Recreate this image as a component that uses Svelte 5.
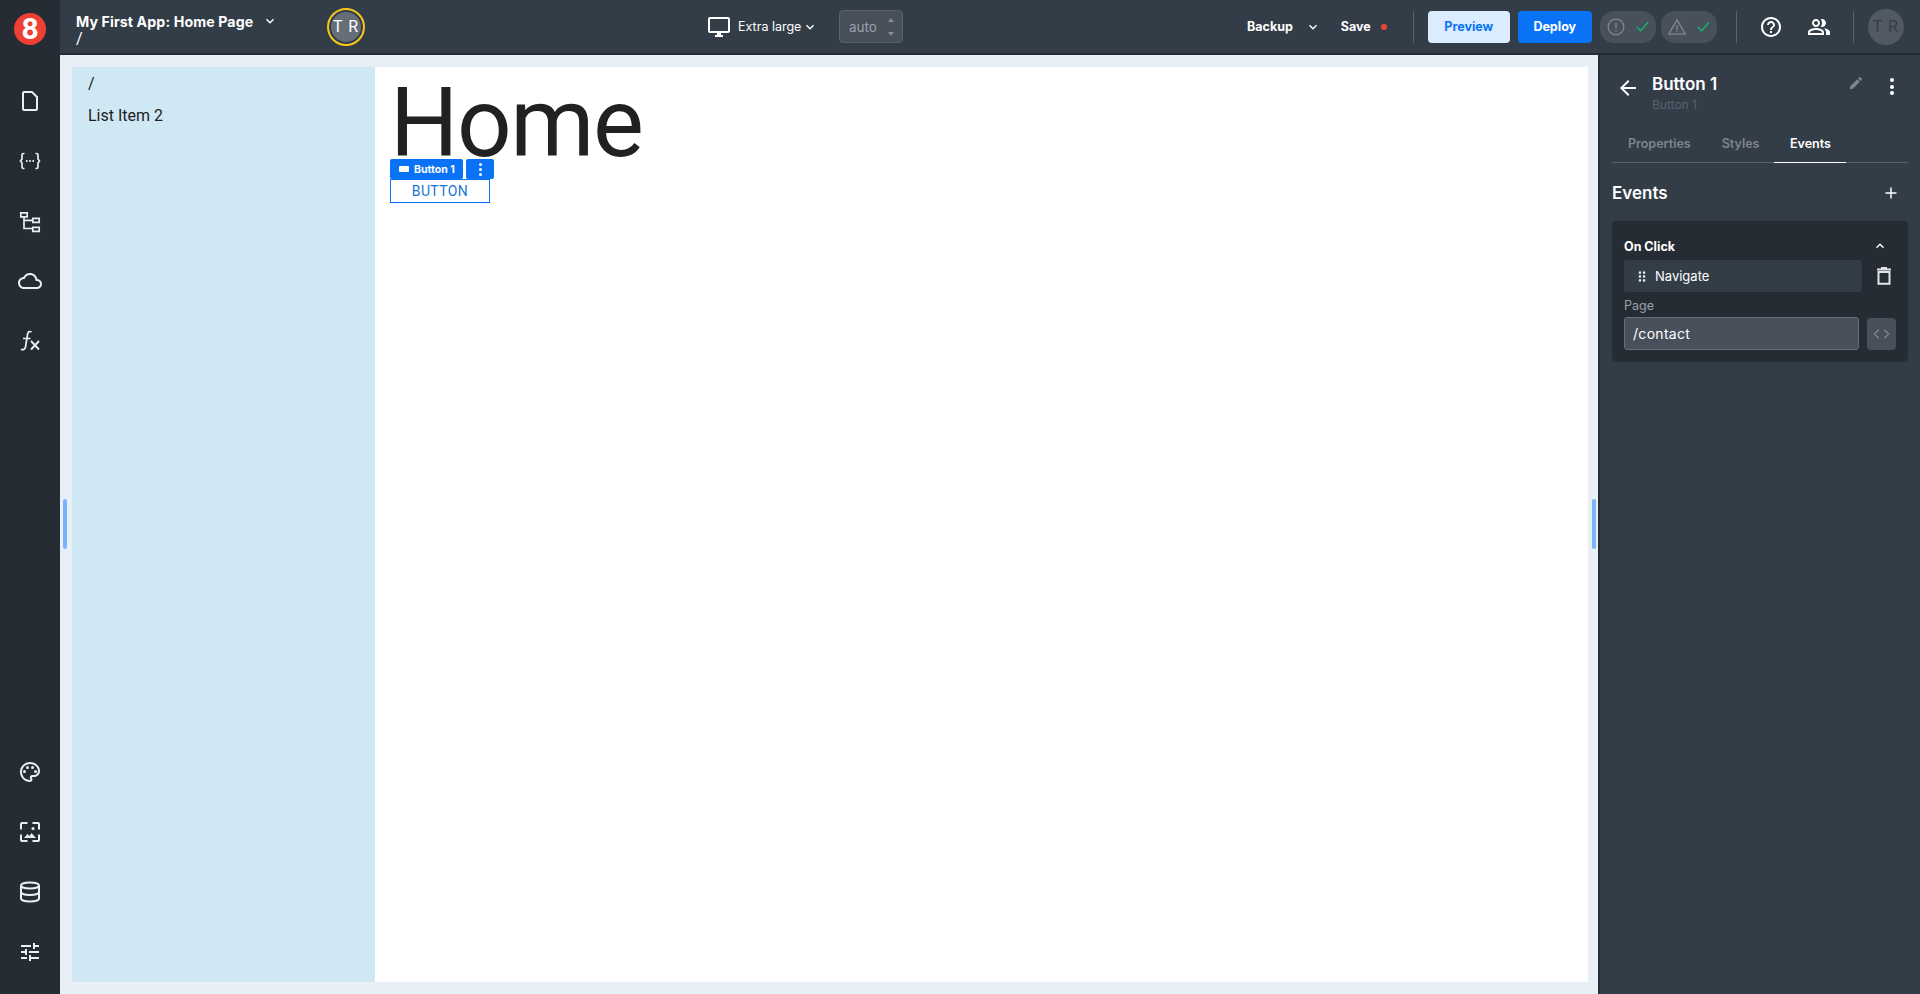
<script>
  const railTop = [
    { kind: "file" },
    { kind: "braces" },
    { kind: "tree" },
    { kind: "cloud" },
    { kind: "fx" }
  ];
  const railBottom = [{ kind: "palette" }, { kind: "image" }, { kind: "db" }, { kind: "tune" }];
  const tabs = ["Properties", "Styles", "Events"];
  const activeTab = "Events";
</script>

{#snippet chevron(cls)}
  <svg class={cls} viewBox="0 0 24 24"><path d="M7.41 8.59 12 13.17l4.59-4.58L18 10l-6 6-6-6z" fill="currentColor" /></svg>
{/snippet}

{#snippet check()}
  <svg class="check" viewBox="0 0 14 14"><path d="M1 7.500 5 11.500 13 2.500" fill="none" stroke="#12b76a" stroke-width="1.600" /></svg>
{/snippet}

{#snippet railIcon(kind)}
  <svg class="rail-icon" viewBox="0 0 24 24" fill="none" stroke="currentColor" stroke-width="2">
    {#if kind === "file"}
      <path d="M6 3h8l5 5v12a1 1 0 0 1-1 1H6a1 1 0 0 1-1-1V4a1 1 0 0 1 1-1z" />
    {:else if kind === "braces"}
      <path d="M6.500 4.500H5.500A1.500 1.500 0 0 0 4 6v4L2.500 12 4 14v4a1.500 1.500 0 0 0 1.500 1.500h1M17.500 4.500h1A1.500 1.500 0 0 1 20 6v4l1.500 2L20 14v4a1.500 1.500 0 0 1-1.500 1.500h-1" stroke-width="1.700" />
      <path d="M8 12h1.500M11.200 12h1.600M14.500 12H16" stroke-width="1.800" />
    {:else if kind === "tree"}
      <path d="M2.800 3.800h6.400v4H2.800zM14.800 9.300h6.400v4h-6.400zM14.800 18.300h6.400v4h-6.400zM6 8v11.500h8.500M6 11.300h8.500" stroke-width="1.700" />
    {:else if kind === "cloud"}
      <path fill="currentColor" stroke="none" d="M12 6c2.620 0 4.880 1.860 5.390 4.430l.3 1.500 1.530.11c1.560.1 2.780 1.410 2.780 2.960 0 1.650-1.350 3-3 3H6c-2.210 0-4-1.790-4-4 0-2.050 1.530-3.760 3.560-3.970l1.070-.11.5-.95C8.080 7.140 9.940 6 12 6m0-2C9.110 4 6.600 5.640 5.350 8.040 2.340 8.360 0 10.910 0 14c0 3.310 2.690 6 6 6h13c2.760 0 5-2.240 5-5 0-2.640-2.050-4.780-4.650-4.960C18.670 6.590 15.640 4 12 4z" />
    {:else if kind === "fx"}
      <path d="M13.500 3c-1.500-1-3.300-.5-3.800 1.500L7.500 18c-.4 2.300-2.400 3.300-4.500 2.200M5 9.500h7.500" stroke-width="1.700" />
      <path d="M13 12l8 8.500M21 12l-8 8.500" stroke-width="1.900" />
    {:else if kind === "palette"}
      <path fill="currentColor" stroke="none" d="M12 22C6.490 22 2 17.510 2 12S6.490 2 12 2s10 4.040 10 9c0 3.310-2.690 6-6 6h-1.770c-.28 0-.5.220-.5.500 0 .12.050.23.130.33.410.47.640 1.060.640 1.670 0 1.380-1.120 2.500-2.500 2.500zm0-18c-4.410 0-8 3.590-8 8s3.590 8 8 8c.28 0 .5-.22.5-.5 0-.16-.08-.28-.14-.35-.41-.46-.63-1.050-.63-1.650 0-1.380 1.120-2.500 2.500-2.500H16c2.210 0 4-1.790 4-4 0-3.860-3.590-7-8-7z" />
      <g fill="currentColor" stroke="none">
        <circle cx="6.500" cy="11.500" r="1.500" /><circle cx="9.500" cy="7.500" r="1.500" /><circle cx="14.500" cy="7.500" r="1.500" /><circle cx="17.500" cy="11.500" r="1.500" />
      </g>
    {:else if kind === "image"}
      <path d="M9.500 3H4a1 1 0 0 0-1 1v5.500M14.500 3H20a1 1 0 0 1 1 1v5.500M3 14.500V20a1 1 0 0 0 1 1h5.500M21 14.500V20a1 1 0 0 1-1 1h-5.500" />
      <circle cx="15" cy="8.500" r="1.500" fill="currentColor" stroke="none" />
      <path d="M6 18l3.500-4 2 2 2-3 4.500 5z" fill="currentColor" stroke="none" />
    {:else if kind === "db"}
      <ellipse cx="12" cy="5.500" rx="9" ry="3" />
      <path d="M3 5.500v13c0 1.700 4 3 9 3s9-1.300 9-3v-13M3 12c0 1.700 4 3 9 3s9-1.300 9-3" />
    {:else if kind === "tune"}
      <path fill="currentColor" stroke="none" d="M3 17v2h6v-2H3zM3 5v2h10V5H3zm10 16v-2h8v-2h-8v-2h-2v6h2zM7 9v2H3v2h4v2h2V9H7zm14 4v-2H11v2h10zm-6-4h2V7h4V5h-4V3h-2v6z" />
    {/if}
  </svg>
{/snippet}

<div class="app">
  <nav class="rail">
    <div class="logo">8</div>
    <div class="rail-group">
      {#each railTop as item}
        <span class="rail-btn">{@render railIcon(item.kind)}</span>
      {/each}
    </div>
    <div class="rail-group rail-bottom">
      {#each railBottom as item}
        <span class="rail-btn">{@render railIcon(item.kind)}</span>
      {/each}
    </div>
  </nav>

  <div class="main">
    <header class="topbar">
      <div class="title-block">
        <div class="title-row">
          <span class="title">My First App: Home Page</span>
          {@render chevron("chev-title")}
        </div>
        <div class="route">/</div>
      </div>
      <div class="presence">T R</div>

      <div class="viewport">
        <svg class="monitor" viewBox="0 0 24 24"><path fill="currentColor" d="M21 2H3c-1.100 0-2 .9-2 2v12c0 1.100.9 2 2 2h7v2H8v2h8v-2h-2v-2h7c1.100 0 2-.9 2-2V4c0-1.100-.9-2-2-2zm0 14H3V4h18v12z" /></svg>
        <span class="size-label">Extra large</span>
        {@render chevron("chev-sm")}
      </div>
      <div class="auto-box">
        <span>auto</span>
        <span class="steppers"><i class="up"></i><i class="down"></i></span>
      </div>

      <div class="actions">
        <span class="action">Backup</span>
        {@render chevron("chev-backup")}
        <span class="action save">Save</span>
        <span class="dot"></span>
        <span class="divider div-a"></span>
        <button class="btn preview">Preview</button>
        <button class="btn deploy">Deploy</button>
        <span class="pill pill-a">
          <svg class="status" viewBox="0 0 24 24"><circle cx="12" cy="12" r="10.500" fill="none" stroke="currentColor" stroke-width="1.700" /><path d="M12 6.500v7M12 15.500v2" stroke="currentColor" stroke-width="1.900" /></svg>
          {@render check()}
        </span>
        <span class="pill pill-b">
          <svg class="status" viewBox="0 0 24 24"><path d="M12 2.500 23 21.500H1z" fill="none" stroke="currentColor" stroke-width="1.900" /><path d="M12 9.500v6M12 17v2" stroke="currentColor" stroke-width="1.900" /></svg>
          {@render check()}
        </span>
        <span class="divider div-b"></span>
        <svg class="help" viewBox="0 0 24 24"><path fill="currentColor" d="M11 18h2v-2h-2v2zm1-16C6.480 2 2 6.480 2 12s4.480 10 10 10 10-4.480 10-10S17.520 2 12 2zm0 18c-4.410 0-8-3.590-8-8s3.590-8 8-8 8 3.590 8 8-3.590 8-8 8zm0-14c-2.210 0-4 1.790-4 4h2c0-1.100.9-2 2-2s2 .9 2 2c0 2-3 1.750-3 5h2c0-2.250 3-2.500 3-5 0-2.210-1.790-4-4-4z" /></svg>
        <svg class="people" viewBox="0 0 24 24"><path fill="currentColor" d="M16.670 13.130C18.040 14.060 19 15.320 19 17v3h4v-3c0-2.180-3.570-3.470-6.330-3.870zM15 12c2.210 0 4-1.790 4-4s-1.790-4-4-4c-.47 0-.91.1-1.330.24C14.500 5.270 15 6.580 15 8s-.5 2.730-1.330 3.760c.42.14.86.24 1.330.24zM9 12c2.210 0 4-1.790 4-4s-1.790-4-4-4-4 1.790-4 4 1.790 4 4 4zm0-6c1.100 0 2 .9 2 2s-.9 2-2 2-2-.9-2-2 .9-2 2-2zM9 13c-2.670 0-8 1.340-8 4v3h16v-3c0-2.660-5.330-4-8-4zm6 5H3v-.99C3.200 16.290 6.300 15 9 15s5.800 1.290 6 2v1z" /></svg>
        <span class="divider div-c"></span>
        <span class="me">T R</span>
      </div>
    </header>

    <div class="workspace">
      <div class="canvas">
        <span class="handle handle-left"></span>
        <span class="handle handle-right"></span>
        <div class="page">
          <ul class="list">
            <li>/</li>
            <li>List Item 2</li>
          </ul>
          <div class="content">
            <h1>Home</h1>
            <div class="selected">
              <div class="sel-bar">
                <span class="sel-name">
                  <i class="sel-glyph"></i>
                  Button 1
                </span>
                <span class="sel-more"><i></i><i></i><i></i></span>
              </div>
              <button class="mui-btn">BUTTON</button>
            </div>
          </div>
        </div>
      </div>

      <aside class="panel">
        <div class="panel-head">
          <svg class="back" viewBox="0 0 24 24"><path fill="currentColor" d="M20 11H7.830l5.590-5.590L12 4l-8 8 8 8 1.410-1.410L7.830 13H20v-2z" /></svg>
          <div class="head-text">
            <div class="head-title">Button 1</div>
            <div class="head-sub">Button 1</div>
          </div>
          <svg class="pencil" viewBox="0 0 24 24"><path fill="currentColor" d="M3 17.250V21h3.750L17.810 9.940l-3.750-3.750L3 17.250zM20.710 7.040c.39-.39.39-1.020 0-1.410l-2.340-2.340a.9959.9959 0 0 0-1.410 0l-1.830 1.830 3.750 3.750 1.830-1.830z" /></svg>
          <span class="kebab"><i></i><i></i><i></i></span>
        </div>

        <div class="tabs">
          {#each tabs as tab}
            <span class="tab" class:active={tab === activeTab}>{tab}</span>
          {/each}
        </div>

        <div class="events-head">
          <span>Events</span>
          <svg class="plus" viewBox="0 0 14 14"><path d="M7 1.500v11M1.500 7h11" stroke="currentColor" stroke-width="1.500" /></svg>
        </div>

        <section class="card">
          <div class="card-head">
            <span>On Click</span>
            <svg class="chev-up" viewBox="0 0 24 24"><path fill="currentColor" d="M12 8l-6 6 1.410 1.410L12 10.830l4.590 4.580L18 14z" /></svg>
          </div>
          <div class="action-row">
            <div class="action-item">
              <svg class="grip" viewBox="0 0 8 12"><g fill="currentColor"><rect x="0.500" y="0.500" width="2.500" height="2.500" /><rect x="5" y="0.500" width="2.500" height="2.500" /><rect x="0.500" y="4.700" width="2.500" height="2.500" /><rect x="5" y="4.700" width="2.500" height="2.500" /><rect x="0.500" y="9" width="2.500" height="2.500" /><rect x="5" y="9" width="2.500" height="2.500" /></g></svg>
              <span>Navigate</span>
            </div>
            <svg class="trash" viewBox="0 0 14 18"><path d="M1.500 5h11v11.800h-11z" fill="none" stroke="currentColor" stroke-width="2" /><path d="M0 2.500h14M4 1h6" stroke="currentColor" stroke-width="2" /></svg>
          </div>
          <div class="field-label">Page</div>
          <div class="field-row">
            <div class="input">/contact</div>
            <span class="code-btn">
              <svg viewBox="0 0 18 12"><path d="M6 1.500 1.500 6 6 10.500M12 1.500 16.500 6 12 10.500" fill="none" stroke="currentColor" stroke-width="1.500" /></svg>
            </span>
          </div>
        </section>
      </aside>
    </div>
  </div>
</div>

<style>
  :global(body) {
    margin: 0;
    background: #e8eff6;
    font-family: Inter, "Liberation Sans", sans-serif;
    overflow: hidden;
  }
  i { display: block; font-style: normal; }

  .app {
    display: flex;
    width: 1920px;
    height: 994px;
    overflow: hidden;
  }

  /* left rail */
  .rail {
    width: 60px;
    flex: none;
    background: #252c34;
    color: #e8eff6;
    display: flex;
    flex-direction: column;
    align-items: center;
    padding-top: 13px;
    box-sizing: border-box;
  }
  .logo {
    width: 32px;
    height: 32px;
    border-radius: 50%;
    background: #ee4035;
    color: #fff;
    font-family: Roboto, sans-serif;
    font-weight: 700;
    font-size: 30px;
    line-height: 32px;
    text-align: center;
  }
  .rail-group {
    display: flex;
    flex-direction: column;
    margin-top: 26px;
  }
  .rail-bottom { margin-top: auto; margin-bottom: 12px; }
  .rail-btn {
    width: 60px;
    height: 60px;
    display: flex;
    align-items: center;
    justify-content: center;
  }
  .rail-icon { width: 24px; height: 24px; }

  .main {
    flex: 1;
    min-width: 0;
    display: flex;
    flex-direction: column;
  }

  /* top bar */
  .topbar {
    height: 53px;
    flex: none;
    background: #333d48;
    border-bottom: 2px solid #252c34;
    color: #fff;
    display: flex;
    align-items: center;
    padding-left: 16px;
  }
  .title-block { width: 251px; }
  .title-row { display: flex; align-items: center; height: 18px; margin-top: 8px; }
  .title { font-size: 14.2px; font-weight: 700; letter-spacing: 0.1px; }
  .chev-title { width: 16px; height: 16px; margin-left: 9px; flex: none; }
  .chev-sm { width: 16px; height: 16px; margin-left: 1px; flex: none; }
  .route { font-family: Roboto, sans-serif; font-size: 16px; line-height: 20px; margin-top: -1px; }
  .presence {
    width: 34px;
    height: 34px;
    border: 2px solid #f5c518;
    border-radius: 50%;
    background: #666e78;
    box-shadow: inset 0 0 0 2px #333d48;
    color: #fff;
    font-family: Roboto, sans-serif;
    font-size: 16px;
    letter-spacing: 1px;
    line-height: 34px;
    text-align: center;
  }
  .viewport {
    display: flex;
    align-items: center;
    margin-left: 342px;
    width: 132px;
    color: #fff;
  }
  .monitor { width: 24px; height: 24px; }
  .size-label { font-size: 12.5px; margin-left: 7px; font-weight: 400; }
  .auto-box {
    width: 64px;
    height: 33px;
    box-sizing: border-box;
    border: 1px solid #58616c;
    border-radius: 4px;
    background: #474f5a;
    color: #9aa1aa;
    font-size: 13.5px;
    display: flex;
    align-items: center;
    padding-left: 9px;
    justify-content: space-between;
    padding-right: 8px;
  }
  .steppers { display: flex; flex-direction: column; gap: 10px; }
  .up, .down {
    width: 0;
    height: 0;
    border-left: 3.5px solid transparent;
    border-right: 3.5px solid transparent;
  }
  .up { border-bottom: 4px solid #858c95; }
  .down { border-top: 4px solid #858c95; }

  .actions {
    display: flex;
    align-items: center;
    margin-left: 344px;
  }
  .action { font-size: 12.5px; font-weight: 700; }
  .chev-backup { width: 16px; height: 16px; margin-left: 12px; }
  .save { margin-left: 20px; }
  .dot {
    width: 6px;
    height: 6px;
    border-radius: 50%;
    background: #f44336;
    margin-left: 10px;
  }
  .divider { width: 1px; height: 32px; background: #58616c; }
  .div-a { margin-left: 26px; }
  .btn {
    height: 32px;
    border: 0;
    border-radius: 4px;
    font-family: inherit;
    font-size: 12.5px;
    font-weight: 700;
    padding: 0;
  }
  .preview { width: 82px; margin-left: 14px; background: #dbecfe; color: #0a73f5; }
  .deploy { width: 74px; margin-left: 8px; background: #0a73f5; color: #fff; }
  .pill {
    width: 56px;
    height: 32px;
    border-radius: 14px;
    background: #47505b;
    color: #7e858e;
    display: flex;
    align-items: center;
    padding-left: 7px;
    box-sizing: border-box;
  }
  .pill-a { margin-left: 8px; }
  .pill-b { margin-left: 5px; }
  .status { width: 18px; height: 18px; flex: none; }
  .check { width: 13px; height: 13px; margin-left: 11px; flex: none; }
  .div-b { margin-left: 19px; }
  .help { width: 24px; height: 24px; margin-left: 22px; }
  .people { width: 24px; height: 24px; margin-left: 24px; }
  .div-c { margin-left: 22px; }
  .me {
    width: 36px;
    height: 36px;
    margin-left: 14px;
    border-radius: 50%;
    background: #515963;
    color: #333d48;
    font-family: Roboto, sans-serif;
    font-size: 16px;
    letter-spacing: 1px;
    line-height: 36px;
    text-align: center;
  }

  .workspace { flex: 1; display: flex; min-height: 0; }

  /* canvas */
  .canvas {
    position: relative;
    flex: 1;
    background: #e8eff6;
    padding: 12px 10px 12px 12px;
    min-width: 0;
  }
  .handle {
    position: absolute;
    top: 444px;
    width: 4px;
    height: 50px;
    border-radius: 2px;
    background: #79b4fa;
  }
  .handle-left { left: 3px; }
  .handle-right { right: 0; left: auto; margin-right: 2px; }
  .page {
    height: 100%;
    background: #fff;
    display: flex;
  }
  .list {
    width: 303px;
    flex: none;
    margin: 0;
    padding: 1px 0 0 16px;
    box-sizing: border-box;
    list-style: none;
    background: #d0e8f4;
    color: #212121;
    font-family: Roboto, sans-serif;
    font-size: 16px;
  }
  .list li { height: 32px; line-height: 32px; }
  .content { flex: 1; padding-left: 15px; }
  h1 {
    margin: 0;
    font-family: Roboto, sans-serif;
    font-weight: 400;
    font-size: 96px;
    line-height: 112px;
    letter-spacing: -1.5px;
    color: #212121;
  }
  .selected { position: relative; width: 100px; }
  .sel-bar {
    position: absolute;
    left: 0;
    top: -20px;
    display: flex;
    gap: 3px;
  }
  .sel-name {
    width: 73px;
    height: 20px;
    background: #0a73f5;
    border-radius: 2px;
    color: #fff;
    font-size: 10.5px;
    font-weight: 700;
    display: flex;
    align-items: center;
    padding-left: 9px;
    box-sizing: border-box;
    white-space: nowrap;
  }
  .sel-glyph {
    width: 10px;
    height: 6px;
    background: #fff;
    border-radius: 1px;
    margin-right: 5px;
    flex: none;
  }
  .sel-more {
    width: 28px;
    height: 20px;
    background: #0a73f5;
    border-radius: 2px;
    display: flex;
    flex-direction: column;
    align-items: center;
    justify-content: center;
    gap: 2px;
  }
  .sel-more i { width: 3px; height: 3px; border-radius: 50%; background: #fff; }
  .mui-btn {
    width: 100px;
    height: 24px;
    padding: 0;
    box-sizing: border-box;
    border: 1px solid #0a73f5;
    background: #fff;
    color: #1976d2;
    font-family: Roboto, sans-serif;
    font-size: 14px;
    letter-spacing: 0.4px;
    display: block;
  }

  /* right panel */
  .panel {
    width: 322px;
    flex: none;
    box-sizing: border-box;
    background: #333d48;
    border-left: 2px solid #252c34;
    padding: 0 12px;
    color: #fff;
  }
  .panel-head {
    display: flex;
    align-items: flex-start;
    height: 66px;
    padding-top: 18px;
    box-sizing: border-box;
  }
  .back { width: 24px; height: 24px; margin: 3px 0 0 4px; flex: none; }
  .head-text { margin-left: 12px; flex: 1; }
  .head-title { font-size: 17px; font-weight: 600; line-height: 22px; }
  .head-sub { font-size: 12px; line-height: 16px; color: #58616c; margin-top: 2px; }
  .pencil { width: 16px; height: 16px; color: #7e858e; margin: 2px 20px 0 0; }
  .kebab {
    display: flex;
    flex-direction: column;
    gap: 2.5px;
    width: 16px;
    align-items: center;
    margin: 5px 8px 0 0;
  }
  .kebab i { width: 4px; height: 4px; border-radius: 50%; background: #fff; }

  .tabs {
    display: flex;
    height: 42px;
    box-sizing: border-box;
    border-bottom: 1px solid #58616c;
    font-size: 12.5px;
    font-weight: 600;
    color: #7e858e;
  }
  .tab {
    padding: 0 16px;
    line-height: 45px;
    height: 42px;
    box-sizing: border-box;
  }
  .tab:nth-child(2) { padding: 0 15px; }
  .tab.active {
    color: #fff;
    border-bottom: 1px solid #fff;
    width: 72px;
    padding: 0;
    text-align: center;
  }
  .events-head {
    display: flex;
    align-items: center;
    justify-content: space-between;
    height: 58px;
    box-sizing: border-box;
    padding-top: 2px;
    font-size: 17px;
    font-weight: 600;
    padding-right: 10px;
  }
  .plus { width: 14px; height: 14px; }

  .card {
    background: #252c34;
    border-radius: 4px;
    padding: 12px;
    height: 141px;
    box-sizing: border-box;
  }
  .card-head {
    display: flex;
    align-items: center;
    justify-content: space-between;
    height: 26px;
    margin-bottom: 1px;
    font-size: 12.5px;
    font-weight: 700;
    padding-right: 8px;
  }
  .chev-up { width: 16px; height: 16px; }
  .action-row { display: flex; align-items: center; }
  .action-item {
    width: 238px;
    height: 32px;
    background: #333d48;
    border-radius: 3px;
    display: flex;
    align-items: center;
    padding-left: 14px;
    box-sizing: border-box;
    font-size: 13px;
    font-weight: 400;
  }
  .grip { width: 8px; height: 11px; margin-right: 9px; color: #e8eff6; }
  .trash { width: 14px; height: 18px; margin-left: 15px; color: #e3e5e8; }
  .field-label { font-size: 12.5px; color: #9aa1aa; line-height: 16px; margin-top: 6px; }
  .field-row { display: flex; align-items: center; margin-top: 3px; }
  .input {
    width: 235px;
    height: 33px;
    box-sizing: border-box;
    background: #47505b;
    border: 1px solid #656d78;
    border-radius: 3px;
    font-size: 14px;
    letter-spacing: 0.3px;
    line-height: 31px;
    padding-left: 8px;
  }
  .code-btn {
    width: 29px;
    height: 32px;
    margin-left: 8px;
    background: #47505b;
    border-radius: 4px;
    color: #7e858e;
    display: flex;
    align-items: center;
    justify-content: center;
  }
  .code-btn svg { width: 17px; height: 12px; }
</style>
